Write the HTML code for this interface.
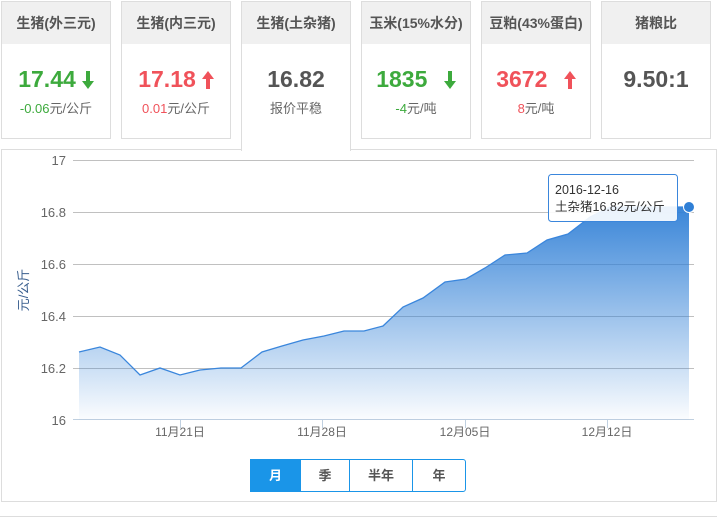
<!DOCTYPE html>
<html><head><meta charset="utf-8"><style>
*{margin:0;padding:0;box-sizing:border-box}
body{width:723px;height:519px;background:#fff;font-family:"Liberation Sans","Noto Sans CJK SC",sans-serif;position:relative;overflow:hidden}
.card{position:absolute;top:1px;width:110px;height:138px;border:1px solid #ddd;background:#fff;text-align:center}
.card .h{height:42px;background:#f0f0f0;line-height:42px;font-size:14px;font-weight:bold;color:#555}
.card .v{margin-top:20px;font-size:23px;font-weight:bold;height:30px;line-height:30px}
.card .s{margin-top:4px;font-size:13px;color:#666}
.g{color:#3daa3d}.r{color:#f0525a}.k{color:#555}
.arr{display:inline-block;margin-left:6px;vertical-align:-2px}
.panel{position:absolute;left:1px;top:149px;width:716px;height:353px;border:1px solid #ddd}
.btns{position:absolute;left:250px;top:459px;height:33px;width:216px;border:1px solid #1a95e8;border-radius:0 3px 3px 0;display:flex;font-size:13px;font-weight:bold;color:#555}
.btns div{line-height:31px;text-align:center;border-left:1px solid #1a95e8}
</style></head><body>
<div class="card" style="left:1px"><div class="h">生猪(外三元)</div><div class="v g">17.44<svg class="arr" width="12" height="18" viewBox="0 0 12 18"><path d="M4,0H8V10H12L6,18L0,10H4Z" fill="#3daa3d"/></svg></div><div class="s"><span class="g">-0.06</span>元/公斤</div></div>
<div class="card" style="left:121px"><div class="h">生猪(内三元)</div><div class="v r">17.18<svg class="arr" width="12" height="18" viewBox="0 0 12 18"><path d="M4,18H8V8H12L6,0L0,8H4Z" fill="#f0525a"/></svg></div><div class="s"><span class="r">0.01</span>元/公斤</div></div>
<div class="card" style="left:241px;height:150px;border-bottom:none;z-index:2"><div class="h">生猪(土杂猪)</div><div class="v k">16.82</div><div class="s">报价平稳</div></div>
<div class="card" style="left:361px"><div class="h">玉米(15%水分)</div><div class="v g">1835 <svg class="arr" width="12" height="18" viewBox="0 0 12 18" style="margin-left:10px"><path d="M4,0H8V10H12L6,18L0,10H4Z" fill="#3daa3d"/></svg></div><div class="s"><span class="g">-4</span>元/吨</div></div>
<div class="card" style="left:481px"><div class="h">豆粕(43%蛋白)</div><div class="v r">3672 <svg class="arr" width="12" height="18" viewBox="0 0 12 18" style="margin-left:10px"><path d="M4,18H8V8H12L6,0L0,8H4Z" fill="#f0525a"/></svg></div><div class="s"><span class="r">8</span>元/吨</div></div>
<div class="card" style="left:601px"><div class="h">猪粮比</div><div class="v k">9.50:1</div></div>
<div class="panel"></div>
<div style="position:absolute;left:0;top:516px;width:717px;border-top:1px solid #ddd"></div>
<svg style="position:absolute;left:0;top:0" width="723" height="519">
<defs><linearGradient id="gr" x1="0" y1="0" x2="0" y2="1"><stop offset="0" stop-color="#2f7fd6"/><stop offset="1" stop-color="#2f7fd6" stop-opacity="0.02"/></linearGradient></defs>
<g stroke="#c0c0c0" stroke-width="1">
<line x1="73" y1="160.5" x2="694" y2="160.5"/><line x1="73" y1="212.5" x2="694" y2="212.5"/><line x1="73" y1="264.5" x2="694" y2="264.5"/><line x1="73" y1="316.5" x2="694" y2="316.5"/><line x1="73" y1="368.5" x2="694" y2="368.5"/>
</g>
<line x1="73" y1="419.5" x2="694" y2="419.5" stroke="#c0d0e0"/>
<g stroke="#c0d0e0"><line x1="180.5" y1="420" x2="180.5" y2="428"/><line x1="322.5" y1="420" x2="322.5" y2="428"/><line x1="465.5" y1="420" x2="465.5" y2="428"/><line x1="607.5" y1="420" x2="607.5" y2="428"/></g>
<path d="M79,352 L100,347 L120,355 L140,375 L160,368 L180,375 L200,370 L221,368 L241,368 L262,352 L282,346 L303,340 L324,336 L344,331 L364,331 L383,326 L403,307 L423,298 L445,282 L466,279 L485,268 L505,255 L527,253 L547,240 L568,234 L590,217 L610,207 L689,207 L689,420 L79,420 Z" fill="url(#gr)" opacity="0.95"/>
<path d="M79,352 L100,347 L120,355 L140,375 L160,368 L180,375 L200,370 L221,368 L241,368 L262,352 L282,346 L303,340 L324,336 L344,331 L364,331 L383,326 L403,307 L423,298 L445,282 L466,279 L485,268 L505,255 L527,253 L547,240 L568,234 L590,217 L610,207 L689,207" fill="none" stroke="#3a86dc" stroke-width="1.3"/>
<circle cx="689" cy="207" r="5.5" fill="#2f7fd6" stroke="#fff" stroke-width="1"/>
<g font-size="13" fill="#666" text-anchor="end" font-family="Liberation Sans,sans-serif">
<text x="66" y="165">17</text><text x="66" y="217">16.8</text><text x="66" y="269">16.6</text><text x="66" y="321">16.4</text><text x="66" y="373">16.2</text><text x="66" y="425">16</text></g>
<g font-size="12" fill="#666" text-anchor="middle" font-family="Liberation Sans,Noto Sans CJK SC,sans-serif">
<text x="180" y="436">11月21日</text><text x="322" y="436">11月28日</text><text x="465" y="436">12月05日</text><text x="607" y="436">12月12日</text></g>
<text transform="translate(28,290) rotate(-90)" text-anchor="middle" font-size="13" fill="#3a5f8f" font-family="Liberation Sans,Noto Sans CJK SC,sans-serif">元/公斤</text>
<rect x="548.5" y="174.5" width="129" height="47" rx="3" fill="#fff" fill-opacity="0.9" stroke="#3a86dc"/>
<text x="555" y="194" font-size="12.5" fill="#333" font-family="Liberation Sans,sans-serif">2016-12-16</text>
<text x="555" y="211" font-size="12.5" fill="#333" font-family="Liberation Sans,Noto Sans CJK SC,sans-serif">土杂猪16.82元/公斤</text>
</svg>
<div class="btns"><div style="width:49px;background:#1a95e8;color:#fff;border-left:none">月</div><div style="width:49px">季</div><div style="width:63px">半年</div><div style="flex:1">年</div></div>
</body></html>
